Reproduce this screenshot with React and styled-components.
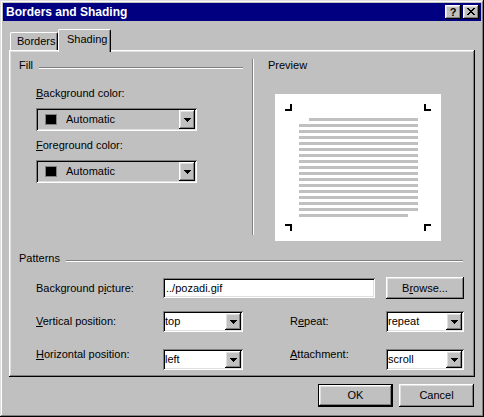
import React from "react";
import styled, { createGlobalStyle } from "styled-components";

const Global = createGlobalStyle`
  html, body { margin: 0; padding: 0; background: #c0c0c0; }
  body { font-family: "Liberation Sans", Arial, sans-serif; font-size: 11px; color: #000; }
`;

const raised = `
  box-shadow: inset -1px -1px #000, inset 1px 1px #fff, inset -2px -2px #808080, inset 2px 2px #dfdfdf;
`;
const sunken = `
  box-shadow: inset 1px 1px #808080, inset -1px -1px #fff, inset 2px 2px #000, inset -2px -2px #dfdfdf;
`;

const Window = styled.div`
  box-sizing: border-box;
  width: 484px;
  height: 417px;
  padding: 3px;
  background: #c0c0c0;
  box-shadow: inset -1px -1px #000, inset 1px 1px #dfdfdf, inset -2px -2px #808080, inset 2px 2px #fff;
  display: flex;
  flex-direction: column;
`;

const TitleBar = styled.div`
  height: 18px;
  background: #000080;
  display: flex;
  align-items: center;
  padding: 0 2px 0 3px;
`;

const Title = styled.div`
  flex: 1;
  color: #fff;
  font-weight: bold;
  font-size: 12px;
  line-height: 18px;
`;

const TitleButtons = styled.div`
  display: flex;
  gap: 2px;
`;

const TitleButton = styled.div`
  box-sizing: border-box;
  width: 16px;
  height: 14px;
  background: #c0c0c0;
  ${raised}
  display: flex;
  align-items: center;
  justify-content: center;
  font-weight: bold;
  font-size: 11px;
  line-height: 14px;
  padding-bottom: 1px;
`;

const Body = styled.div`
  padding: 8px 6px 0 6px;
  display: flex;
  flex-direction: column;
`;

const TabStrip = styled.div`
  display: flex;
  align-items: flex-end;
  height: 21px;
  padding-left: 1px;
`;

const Tab = styled.div`
  box-sizing: border-box;
  position: relative;
  z-index: ${(p) => (p.$active ? 2 : 1)};
  width: ${(p) => p.$w}px;
  height: ${(p) => (p.$active ? 23 : 18)}px;
  margin-bottom: ${(p) => (p.$active ? -2 : 0)}px;
  padding: ${(p) => (p.$active ? "3px 0 0 8px" : "2px 0 0 6px")};
  background: #c0c0c0;
  border-top: 1px solid #fff;
  border-left: 1px solid #fff;
  border-right: 1px solid #000;
  border-radius: 2px 2px 0 0;
  box-shadow: inset -1px 0 #808080;
  line-height: 13px;
`;

const Panel = styled.div`
  box-sizing: border-box;
  height: 327px;
  background: #c0c0c0;
  box-shadow: inset -1px -1px #000, inset 1px 1px #fff, inset -2px -2px #808080, inset 2px 2px #dfdfdf;
  padding: 2px;
  display: flex;
  flex-direction: column;
`;

const TopArea = styled.div`
  display: flex;
  height: 200px;
`;

const LeftCol = styled.div`
  width: 241px;
  display: flex;
  flex-direction: column;
`;

const GroupHeader = styled.div`
  display: flex;
  align-items: flex-start;
  margin: ${(p) => p.$m};
  line-height: 13px;
`;

const GroupLine = styled.div`
  flex: 1;
  margin: 8px 0 0 6px;
  border-top: 1px solid #808080;
  border-bottom: 1px solid #fff;
`;

const FieldBlock = styled.div`
  margin-left: 25px;
  display: flex;
  flex-direction: column;
`;

const FieldLabel = styled.div`
  margin-top: ${(p) => p.$mt}px;
  line-height: 13px;
`;

const Separator = styled.div`
  width: 0;
  height: 176px;
  margin-top: 7px;
  border-left: 1px solid #808080;
  border-right: 1px solid #fff;
`;

const RightCol = styled.div`
  flex: 1;
  padding-left: 14px;
  display: flex;
  flex-direction: column;
`;

const PreviewLabel = styled.div`
  margin-top: 7px;
  line-height: 13px;
`;

const PreviewPage = styled.svg`
  display: block;
  margin: 22px 0 0 7px;
  background: #fff;
`;

const ColorCombo = styled.div`
  box-sizing: border-box;
  margin-top: 8px;
  width: 161px;
  height: 23px;
  padding: 2px;
  background: #c0c0c0;
  ${sunken}
  display: flex;
  align-items: center;
`;

const Swatch = styled.div`
  box-sizing: border-box;
  width: 12px;
  height: 11px;
  margin-left: 7px;
  background: #000;
  border: 1px solid #808080;
`;

const ComboText = styled.div`
  flex: 1;
  margin-left: ${(p) => p.$ml}px;
  line-height: 13px;
  white-space: nowrap;
  overflow: hidden;
`;

const DropButton = styled.div`
  box-sizing: border-box;
  width: 16px;
  align-self: stretch;
  background: #c0c0c0;
  ${raised}
  display: flex;
  align-items: center;
  justify-content: center;
`;

const PatternGrid = styled.div`
  display: grid;
  grid-template-columns: 127px 80px 47px 96px 78px;
  align-items: center;
  margin: ${(p) => p.$mt}px 0 0 25px;
  height: ${(p) => p.$h}px;
`;

const RowLabel = styled.div`
  line-height: 13px;
  grid-column: ${(p) => p.$col};
  margin-bottom: ${(p) => (p.$raise ? p.$raise * 2 : 0)}px;
`;

const Combo = styled.div`
  box-sizing: border-box;
  grid-column: ${(p) => p.$col};
  width: ${(p) => p.$w}px;
  height: 21px;
  padding: 2px;
  background: #fff;
  ${sunken}
  display: flex;
  align-items: center;
`;

const TextBox = styled.div`
  box-sizing: border-box;
  grid-column: 2 / span 3;
  width: 212px;
  height: 20px;
  padding: 2px 2px 2px 3px;
  background: #fff;
  ${sunken}
  line-height: 16px;
`;

const Button = styled.div`
  box-sizing: border-box;
  grid-column: ${(p) => p.$col || "auto"};
  width: ${(p) => p.$w}px;
  height: ${(p) => p.$h}px;
  background: #c0c0c0;
  ${(p) =>
    p.$default
      ? `box-shadow: inset 0 0 0 1px #000, inset -2px -2px #000, inset 2px 2px #fff, inset -3px -3px #808080, inset 3px 3px #dfdfdf;`
      : raised}
  display: flex;
  align-items: center;
  justify-content: center;
  line-height: 13px;
`;

const ButtonRow = styled.div`
  display: flex;
  justify-content: flex-end;
  gap: 6px;
  margin-top: 7px;
  padding-right: 1px;
`;

const Key = styled.span`
  text-decoration: underline;
  text-underline-offset: 1px;
`;

const Arrow = () => (
  <svg width="7" height="4" viewBox="0 0 7 4" shapeRendering="crispEdges">
    <path d="M0 0h7v1H0zM1 1h5v1H1zM2 2h3v1H2zM3 3h1v1H3z" fill="#000" />
  </svg>
);

const CloseGlyph = () => (
  <svg width="8" height="7" viewBox="0 0 8 7" shapeRendering="crispEdges">
    <path
      d="M0 0h2v1H0zM6 0h2v1H6zM1 1h2v1H1zM5 1h2v1H5zM2 2h4v1H2zM3 3h2v1H3zM2 4h4v1H2zM1 5h2v1H1zM5 5h2v1H5zM0 6h2v1H0zM6 6h2v1H6z"
      fill="#000"
    />
  </svg>
);

const Preview = () => {
  const lines = [];
  for (let k = 0; k < 17; k++) {
    const y = 24 + k * 6;
    let x = 24;
    let w = 119;
    if (k === 0) {
      x = 34;
      w = 109;
    }
    if (k === 16) w = 109;
    lines.push(<rect key={k} x={x} y={y} width={w} height={3} fill="#c0c0c0" />);
  }
  return (
    <PreviewPage width="166" height="147" viewBox="0 0 166 147" shapeRendering="crispEdges">
      {lines}
      <g fill="#000">
        <rect x="10" y="15" width="7" height="2" />
        <rect x="15" y="10" width="2" height="7" />
        <rect x="149" y="15" width="7" height="2" />
        <rect x="149" y="10" width="2" height="7" />
        <rect x="10" y="130" width="7" height="2" />
        <rect x="15" y="130" width="2" height="7" />
        <rect x="149" y="130" width="7" height="2" />
        <rect x="149" y="130" width="2" height="7" />
      </g>
    </PreviewPage>
  );
};

export default function App() {
  return (
    <>
      <Global />
      <Window>
        <TitleBar>
          <Title>Borders and Shading</Title>
          <TitleButtons>
            <TitleButton>?</TitleButton>
            <TitleButton>
              <CloseGlyph />
            </TitleButton>
          </TitleButtons>
        </TitleBar>
        <Body>
          <TabStrip>
            <Tab $w={48}>Borders</Tab>
            <Tab $w={53} $active>
              Shading
            </Tab>
          </TabStrip>
          <Panel>
            <TopArea>
              <LeftCol>
                <GroupHeader $m="7px 9px 0 8px">
                  <span>Fill</span>
                  <GroupLine />
                </GroupHeader>
                <FieldBlock>
                  <FieldLabel $mt={15}>
                    <Key>B</Key>ackground color:
                  </FieldLabel>
                  <ColorCombo>
                    <Swatch />
                    <ComboText $ml={9}>Automatic</ComboText>
                    <DropButton>
                      <Arrow />
                    </DropButton>
                  </ColorCombo>
                  <FieldLabel $mt={8}>
                    <Key>F</Key>oreground color:
                  </FieldLabel>
                  <ColorCombo>
                    <Swatch />
                    <ComboText $ml={9}>Automatic</ComboText>
                    <DropButton>
                      <Arrow />
                    </DropButton>
                  </ColorCombo>
                </FieldBlock>
              </LeftCol>
              <Separator />
              <RightCol>
                <PreviewLabel>Preview</PreviewLabel>
                <Preview />
              </RightCol>
            </TopArea>
            <GroupHeader $m="0 10px 0 8px">
              <span>Patterns</span>
              <GroupLine />
            </GroupHeader>
            <PatternGrid $mt={12} $h={22}>
              <RowLabel $col="1">
                Background p<Key>i</Key>cture:
              </RowLabel>
              <TextBox>../pozadi.gif</TextBox>
              <Button $col="5" $w={78} $h={22}>
                <span>
                  B<Key>r</Key>owse...
                </span>
              </Button>
            </PatternGrid>
            <PatternGrid $mt={12} $h={21}>
              <RowLabel $col="1">
                <Key>V</Key>ertical position:
              </RowLabel>
              <Combo $col="2" $w={80}>
                <ComboText $ml={0}>top</ComboText>
                <DropButton>
                  <Arrow />
                </DropButton>
              </Combo>
              <RowLabel $col="4">
                R<Key>e</Key>peat:
              </RowLabel>
              <Combo $col="5" $w={78}>
                <ComboText $ml={0}>repeat</ComboText>
                <DropButton>
                  <Arrow />
                </DropButton>
              </Combo>
            </PatternGrid>
            <PatternGrid $mt={16} $h={21}>
              <RowLabel $col="1" $raise={5}>
                <Key>H</Key>orizontal position:
              </RowLabel>
              <Combo $col="2" $w={80}>
                <ComboText $ml={0}>left</ComboText>
                <DropButton>
                  <Arrow />
                </DropButton>
              </Combo>
              <RowLabel $col="4" $raise={5}>
                <Key>A</Key>ttachment:
              </RowLabel>
              <Combo $col="5" $w={78}>
                <ComboText $ml={0}>scroll</ComboText>
                <DropButton>
                  <Arrow />
                </DropButton>
              </Combo>
            </PatternGrid>
          </Panel>
          <ButtonRow>
            <Button $w={75} $h={23} $default>
              OK
            </Button>
            <Button $w={75} $h={23}>
              Cancel
            </Button>
          </ButtonRow>
        </Body>
      </Window>
    </>
  );
}
